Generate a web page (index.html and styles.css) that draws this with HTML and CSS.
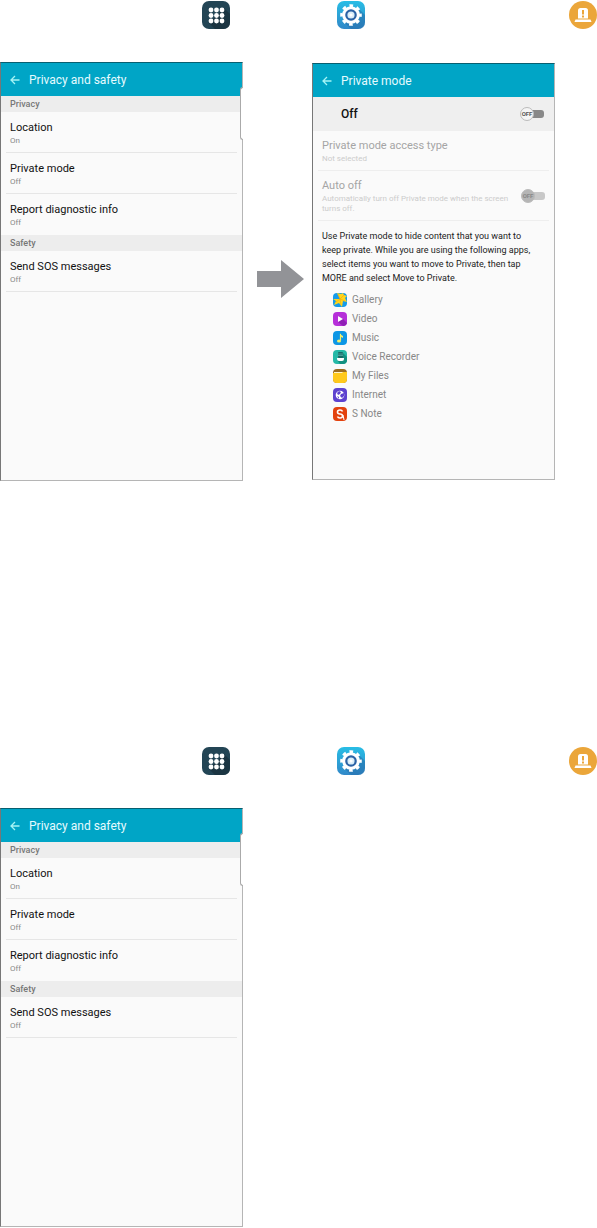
FILE: index.html
```
<!DOCTYPE html>
<html lang="en">
<head>
  <meta charset="utf-8">
  <title>Private mode</title>
  <link rel="stylesheet" href="styles.css">
</head>
<body>
  <!-- shapes used more than once -->
  <svg class="defs" aria-hidden="true">
    <symbol id="apps" viewBox="0 0 28 28">
      <rect width="28" height="28" rx="7" fill="#234555"/>
      <path d="M22 7l6 6v8q0 7-7 7h-8l-6-6z" fill="#1b3542"/>
      <g fill="#fff">
        <circle cx="9" cy="9" r="2.400"/><circle cx="14.500" cy="9" r="2.400"/><circle cx="20" cy="9" r="2.400"/>
        <circle cx="9" cy="14.500" r="2.400"/><circle cx="14.500" cy="14.500" r="2.400"/><circle cx="20" cy="14.500" r="2.400"/>
        <circle cx="9" cy="20" r="2.400"/><circle cx="14.500" cy="20" r="2.400"/><circle cx="20" cy="20" r="2.400"/>
      </g>
    </symbol>
    <symbol id="settings" viewBox="0 0 28 28">
      <linearGradient id="sky" x2="0" y2="1"><stop stop-color="#28bde5"/><stop offset="1" stop-color="#3188c8"/></linearGradient>
      <rect width="28" height="28" rx="7" fill="url(#sky)"/>
      <path d="M21 7l7 7v7q0 7-7 7h-7l-7-7z" fill="#236ca8" opacity=".5"/>
      <circle cx="14" cy="14" r="9.300" fill="none" stroke="#fff" stroke-width="3" stroke-dasharray="3.600 3.703" stroke-dashoffset="1.800"/>
      <circle cx="14" cy="14" r="8.800" fill="#fff"/>
      <circle cx="14" cy="14" r="4.700" fill="#d9edf8" stroke="#2b62a5" stroke-width="2.200"/>
      <circle cx="14" cy="14" r="1.600" fill="#fff"/>
    </symbol>
    <symbol id="safety" viewBox="0 0 28 28">
      <circle cx="14" cy="14" r="14" fill="#eba63a"/>
      <path d="M9 17.500V9.500q0-2.500 2.500-2.500h5q2.500 0 2.500 2.500v8z" fill="#fff"/>
      <path d="M6.500 18.500h15l1 2.500h-17z" fill="#fff"/>
      <path d="M13 9h2v4.500h-2zM13 14.500h2v2h-2z" fill="#eba63a"/>
    </symbol>
    <symbol id="back" viewBox="0 0 10 10">
      <path d="M9.500 5H1.200M5 1L1 5l4 4" fill="none" stroke="#a5f3f5" stroke-width="1.300"/>
    </symbol>
  </svg>

  <section class="step">
    <div class="path">
      <svg class="apps"><use href="#apps"/></svg>
      <svg class="settings"><use href="#settings"/></svg>
      <svg class="safety"><use href="#safety"/></svg>
    </div>
    <div class="screens">
      <div class="phone">
        <header><button type="button" aria-label="Back"><svg><use href="#back"/></svg></button><h1>Privacy and safety</h1></header>
        <div class="edge"></div>
        <h2>Privacy</h2>
        <ul class="rows">
          <li><a href="#">Location<small>On</small></a></li>
          <li><a href="#">Private mode<small>Off</small></a></li>
          <li><a href="#">Report diagnostic info<small>Off</small></a></li>
        </ul>
        <h2>Safety</h2>
        <ul class="rows last">
          <li><a href="#">Send SOS messages<small>Off</small></a></li>
        </ul>
      </div>

      <svg class="next" viewBox="0 0 47 38"><path d="M0 11h24V0l23 19-23 19V27H0z" fill="#929397"/></svg>

      <div class="phone">
        <header><button type="button" aria-label="Back"><svg><use href="#back"/></svg></button><h1>Private mode</h1></header>
        <label class="master">Off
          <span class="toggle"><input type="checkbox" role="switch"><span class="knob">OFF</span></span>
        </label>
        <ul class="rows last disabled">
          <li><a href="#">Private mode access type<small>Not selected</small></a></li>
          <li>
            <label>
              <span>Auto off<small>Automatically turn off Private mode when the screen turns off.</small></span>
              <span class="toggle"><input type="checkbox" role="switch" disabled><span class="knob">OFF</span></span>
            </label>
          </li>
        </ul>
        <p>Use Private mode to hide content that you want to keep private. While you are using the following apps, select items you want to move to Private, then tap MORE and select Move to Private.</p>
        <ul class="applist">
          <li>
            <svg viewBox="0 0 14 14"><rect width="14" height="14" rx="4" fill="#159bea"/><path d="M7 6L4 0l4 1 2-1 1 2 3 1-2 2 2 4-4-1-1 6-3-4-5 2 2-4-3-2z" fill="#ffd51c"/><path d="M7 6l4-4M7 6l5 2M7 6L5 1M7 6L3 9M7 6l1 6" stroke="#eda90d" stroke-width=".6"/></svg>
            Gallery
          </li>
          <li>
            <svg viewBox="0 0 14 14"><rect width="14" height="14" rx="4" fill="#b62fd9"/><path d="M5 4l5 3 4 4q-1 3-4 3L5 10z" fill="#8f20b5"/><path d="M5 4l5 3-5 3z" fill="#fff"/></svg>
            Video
          </li>
          <li>
            <svg viewBox="0 0 14 14"><rect width="14" height="14" rx="4" fill="#0c96e5"/><path d="M7.500 3v6.500" stroke="#f4f06b" stroke-width="1.200"/><path d="M7 2q0 2 3 3v2Q8 6 7 5z" fill="#f4f06b"/><ellipse cx="6" cy="10" rx="2" ry="1.500" fill="#f4f06b"/></svg>
            Music
          </li>
          <li>
            <svg viewBox="0 0 14 14"><rect width="14" height="14" rx="4" fill="#25b9a7"/><path d="M10 3l4 4v4q-1 3-4 3H7l-3-4z" fill="#129080"/><rect x="5" y="2" width="5" height="6" rx="1" fill="#176b67"/><path d="M5 4h5M5 5.500h5" stroke="#76d6cb" stroke-width=".5"/><path d="M4 8h7v1q0 2-2 2H6q-2 0-2-2z" fill="#fff"/></svg>
            Voice Recorder
          </li>
          <li>
            <svg viewBox="0 0 14 14"><rect width="14" height="14" rx="4" fill="#9b6d20"/><path d="M1 3h11v2H1z" fill="#fff3ca"/><path d="M0 4h9l1-1h4v7q0 4-4 4H4q-4 0-4-4z" fill="#ffc91b"/></svg>
            My Files
          </li>
          <li>
            <svg viewBox="0 0 14 14"><rect width="14" height="14" rx="4" fill="#5d42cf"/><circle cx="7" cy="7" r="4.300" fill="#fff"/><path d="M4 5l2-2 2 1-1 2-2 1zM8 6l3-1v3L9 10 7 8zM4 8l2 1v2z" fill="#5d42cf"/></svg>
            Internet
          </li>
          <li>
            <svg viewBox="0 0 14 14"><rect width="14" height="14" rx="4" fill="#e3420e"/><path d="M9.500 4.500Q9 3 7 3 4.500 3 4.500 5t2.500 2 2.500 2-2.500 2q-2 0-2.500-1.500" fill="none" stroke="#fff" stroke-width="1.600"/><path d="M10 8l1 5" stroke="#fff"/></svg>
            S Note
          </li>
        </ul>
      </div>
    </div>
  </section>

  <section class="step">
    <div class="path">
      <svg class="apps"><use href="#apps"/></svg>
      <svg class="settings"><use href="#settings"/></svg>
      <svg class="safety"><use href="#safety"/></svg>
    </div>
    <div class="screens">
      <div class="phone">
        <header><button type="button" aria-label="Back"><svg><use href="#back"/></svg></button><h1>Privacy and safety</h1></header>
        <div class="edge"></div>
        <h2>Privacy</h2>
        <ul class="rows">
          <li><a href="#">Location<small>On</small></a></li>
          <li><a href="#">Private mode<small>Off</small></a></li>
          <li><a href="#">Report diagnostic info<small>Off</small></a></li>
        </ul>
        <h2>Safety</h2>
        <ul class="rows last">
          <li><a href="#">Send SOS messages<small>Off</small></a></li>
        </ul>
      </div>
    </div>
  </section>
</body>
</html>
```
FILE: styles.css
```
*{
  box-sizing:border-box;
}
body{
  margin:0;
  background:#fff;
  color:#111;
  font-family:Roboto, "Liberation Sans", sans-serif;
  font-size:12px;
  line-height:16px;
}
h1, h2, p, ul{
  margin:0;
  padding:0;
  font-weight:400;
}
ul{
  list-style:none;
}
a{
  color:inherit;
  text-decoration:none;
}
svg{
  display:block;
}
.defs{
  position:absolute;
  width:0;
  height:0;
}
.step{
  padding-top:1px;
}
.step + .step{
  margin-top:265px;
}
.path{
  display:grid;
  grid-template-columns:202fr 28px 107fr 28px 204fr 28px;
  margin-bottom:33px;
}
.path svg{
  width:28px;
  height:28px;
}
.apps{
  grid-column:2;
}
.settings{
  grid-column:4;
}
.safety{
  grid-column:6;
}
.screens{
  display:grid;
  grid-template-columns:243fr 69fr 243fr 42fr;
  align-items:center;
}
.next{
  width:47px;
  margin:14px auto 0 14px;
}

/* phone screen */
.phone{
  position:relative;
  min-height:419px;
  border:1px solid #b5b5b5;
  border-top-color:#075f70;
  border-left-color:#777;
  background:#fafafa;
}
.next + .phone{
  min-height:417px;
}
.phone header{
  display:flex;
  align-items:center;
  height:33px;
  padding-left:9px;
  background:#00a5c6;
  color:#e6fbff;
}
.phone header button{
  width:10px;
  height:10px;
  margin-right:9px;
  padding:0;
  border:0;
  background:none;
}
.phone header svg{
  width:10px;
  height:10px;
}
.phone h1{
  font-size:12px;
}
.edge{
  position:absolute;
  top:24px;
  right:-1px;
  width:3px;
  height:53px;
  border:1px solid #aaa;
  border-right:0;
  border-radius:3px 0 0 3px;
  background:#fff;
}
.phone h2{
  padding-left:9px;
  background:#ededed;
  color:#777;
  font-size:9px;
  font-weight:500;
}
.rows li{
  margin:0 5px;
  padding:8px 4px 6px;
  border-bottom:1px solid #e6e6e6;
  font-size:11px;
}
.rows:not(.last) li:last-child{
  border-bottom-color:transparent;
}
.rows a{
  display:block;
}
.rows small{
  display:block;
  color:#888;
  font-size:8px;
  line-height:10px;
}

/* private mode */
.master{
  display:flex;
  justify-content:space-between;
  align-items:center;
  height:34px;
  padding:0 10px 0 28px;
  background:#efefef;
  font-weight:500;
}
.rows.disabled li{
  padding-top:7px;
  border-bottom-color:#eee;
  color:#a5a5a5;
}
.rows.disabled small{
  color:#ccc;
}
.rows label{
  display:flex;
  align-items:center;
  justify-content:space-between;
}
.toggle{
  position:relative;
  flex:none;
  width:24px;
  height:14px;
}
.toggle input{
  appearance:none;
  display:block;
  width:18px;
  height:8px;
  margin:3px 0 0 6px;
  border-radius:3px;
  background:#888;
}
.knob{
  position:absolute;
  top:0;
  left:0;
  width:14px;
  height:14px;
  border:1px solid #bbb;
  border-radius:50%;
  background:#f5f5f5;
  color:#555;
  font-size:6px;
  font-weight:700;
  line-height:12px;
  text-align:center;
}
.disabled .toggle input{
  background:#c8c8c8;
}
.disabled .knob{
  background:#b5b5b5;
  color:#888;
}
.phone p{
  padding:8px 16px 0 9px;
  color:#222;
  font-size:9px;
  line-height:14px;
}
.applist{
  padding:5px 0 0 20px;
}
.applist li{
  display:flex;
  align-items:center;
  gap:5px;
  height:19px;
  color:#888;
  font-size:10px;
}
.applist svg{
  width:14px;
  height:14px;
}
```
